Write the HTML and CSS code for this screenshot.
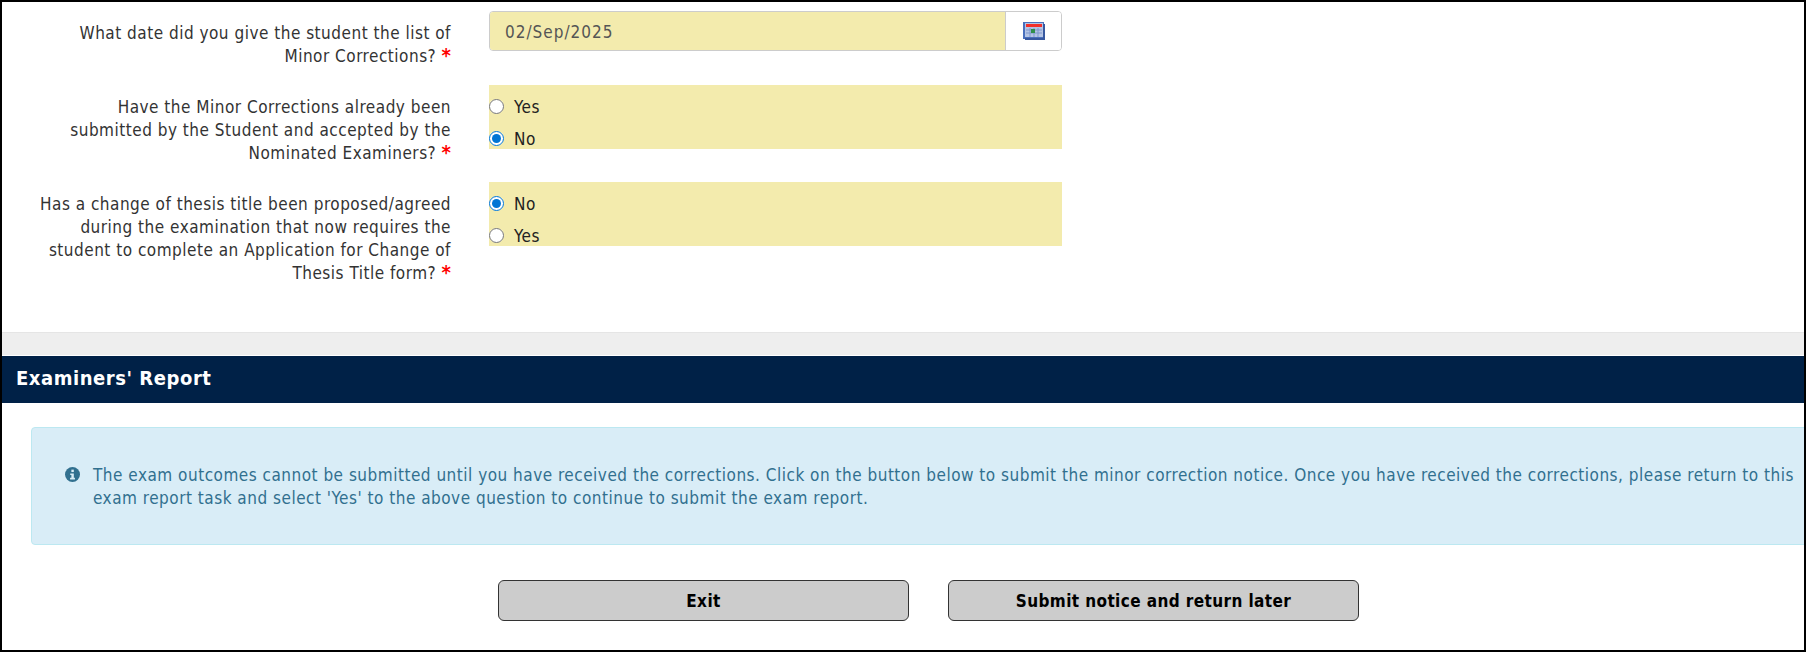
FILE: index.html
```html
<!DOCTYPE html>
<html lang="en">
<head>
  <meta charset="UTF-8" />
  <title>Examiners' Report</title>
  <link rel="stylesheet" href="styles.css">
</head>
<body>
  <div class="page">

    <div class="form-area">
      <div class="form-row">
        <div class="q-label">What date did you give the student the list of Minor Corrections? <span class="req">*</span></div>
        <div class="date-group">
          <div class="date-input">02/Sep/2025</div>
          <div class="date-addon">
            <svg class="cal-icon" width="22" height="18" viewBox="0 0 22 18">
              <rect x="0" y="0" width="21" height="17" fill="#4a70bd"/>
              <rect x="2" y="1" width="18" height="14" fill="#b4c4e4"/>
              <rect x="3" y="2" width="16" height="3" fill="#f2302a"/>
              <path d="M3 8h16M3 11h16M7 6v9M11 6v9M15 6v9" stroke="#7f97cd" stroke-width="1"/>
              <rect x="8" y="7" width="4" height="4" fill="#2f8f4a"/>
              <rect x="2" y="16" width="20" height="2" fill="#37589f"/>
              <rect x="20" y="2" width="2" height="16" fill="#37589f"/>
            </svg>
          </div>
        </div>
      </div>

      <div class="form-row">
        <div class="q-label">Have the Minor Corrections already been submitted by the Student and accepted by the Nominated Examiners? <span class="req">*</span></div>
        <div class="radio-group">
          <label class="radio-row"><input type="radio" name="accepted" /> Yes</label>
          <label class="radio-row"><input type="radio" name="accepted" checked /> No</label>
        </div>
      </div>

      <div class="form-row">
        <div class="q-label">Has a change of thesis title been proposed/agreed during the examination that now requires the student to complete an Application for Change of Thesis Title form? <span class="req">*</span></div>
        <div class="radio-group">
          <label class="radio-row"><input type="radio" name="title" checked /> No</label>
          <label class="radio-row"><input type="radio" name="title" /> Yes</label>
        </div>
      </div>
    </div>

    <div class="band"></div>
    <div class="section-head">Examiners' Report</div>

    <div class="alert">
      <svg class="info-icon" width="15" height="15" viewBox="0 0 16 16">
        <circle cx="8" cy="8" r="8" fill="#31708f"/>
        <rect x="6.8" y="2.8" width="2.6" height="2.6" fill="#d9edf7"/>
        <path d="M5.6 6.8h3.8v4.6h1.2v1.8H5.4v-1.8h1.4V8.6H5.6z" fill="#d9edf7"/>
      </svg>
      <div class="alert-text">The exam outcomes cannot be submitted until you have received the corrections. Click on the button below to submit the minor correction notice. Once you have received the corrections, please return to this exam report task and select 'Yes' to the above question to continue to submit the exam report.</div>
    </div>

    <div class="buttons">
      <button class="btn">Exit</button>
      <button class="btn">Submit notice and return later</button>
    </div>

  </div>
</body>
</html>
```

FILE: styles.css
```css
html, body {
  margin: 0;
  padding: 0;
  height: 100%;
  overflow: hidden;
  background: white;
}

.page {
  box-sizing: border-box;
  height: 652px;
  border: 2px solid black;
  overflow: hidden;
  font-family: "DejaVu Sans Condensed", "DejaVu Sans", sans-serif;
  font-stretch: condensed;
  font-size: 17px;
  letter-spacing: 0.5px;
  line-height: 23px;
  color: #333;
}

.form-area {
  padding-top: 9px;
  height: 330px;
  box-sizing: border-box;
}

.form-row {
  display: flex;
  margin-bottom: 17.5px;
}

.q-label {
  box-sizing: border-box;
  width: 449px;
  padding: 10.5px 0 0 31px;
  text-align: right;
  flex: none;
}

.req {
  color: #f00;
  font-weight: bold;
  font-size: 20px;
  line-height: 20px;
  letter-spacing: 0;
}

.date-group {
  display: flex;
  margin-left: 38px;
  width: 573px;
  height: 40px;
  box-sizing: border-box;
  border: 1px solid #ccc;
  border-radius: 4px;
  overflow: hidden;
}

.date-input {
  flex: 1;
  background: #f3ebad;
  color: #555;
  padding: 9px 15px;
  letter-spacing: 1px;
}

.date-addon {
  width: 55px;
  border-left: 1px solid #ccc;
  display: flex;
  justify-content: center;
  align-items: center;
  background: white;
}

.cal-icon {
  filter: blur(0.5px);
}

.radio-group {
  margin-left: 38px;
  width: 573px;
  height: 64px;
  background: #f3ebad;
}

.radio-row {
  display: flex;
  align-items: center;
  gap: 10px;
  height: 32px;
  box-sizing: border-box;
  padding-top: 12px;
  color: #222;
}

.radio-row input {
  margin: 0 0 2px;
  width: 15px;
  height: 15px;
  accent-color: #0075d4;
}

.band {
  height: 24px;
  box-sizing: border-box;
  background: #eee;
  border-top: 1px solid #e5e5e5;
  border-bottom: 1px solid white;
}

.section-head {
  background: #002147;
  color: white;
  font-weight: bold;
  font-size: 20px;
  letter-spacing: 0.55px;
  height: 47px;
  line-height: 45px;
  padding-left: 14px;
}

.alert {
  display: flex;
  box-sizing: border-box;
  margin: 24px 0 35px 29px;
  width: 1790px;
  height: 118px;
  padding: 36px 0 0 33px;
  background: #d9edf7;
  border: 1px solid #bce8f1;
  border-radius: 4px;
  color: #31708f;
}

.info-icon {
  flex: none;
  margin: 3px 13px 0 0;
}

.alert-text {
  width: 1708px;
  flex: none;
}

.buttons {
  display: flex;
  gap: 39px;
  padding-left: 496px;
}

.btn {
  width: 411px;
  height: 41px;
  padding-top: 3px;
  background: #ccc;
  border: 1px solid #333;
  border-radius: 6px;
  color: black;
  font: inherit;
  font-weight: bold;
  letter-spacing: 0.4px;
}
```
